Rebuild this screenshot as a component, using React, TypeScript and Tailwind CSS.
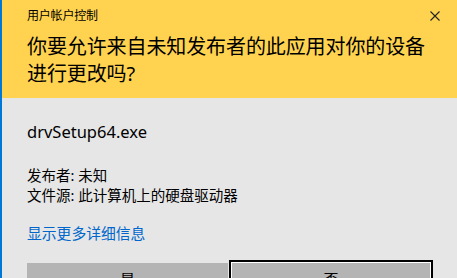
export default function App() {
  const font = { fontFamily: '"Noto Sans", "Noto Sans CJK SC", sans-serif' };
  return (
    <div
      className="w-[457px] h-[278px] overflow-hidden flex border-l-2 border-[#0078d7] bg-[#e6e6e6] text-black"
      style={font}
    >
      <div className="flex-1 flex flex-col">
        <div className="h-[98px] shrink-0 bg-[#ffd34f] pl-[25px] pr-[17px] pt-[8px] flex flex-col">
          <div className="flex items-start justify-between">
            <div className="text-[12px] leading-[16px] tracking-[-0.2px]">用户帐户控制</div>
            <svg width="10" height="10" viewBox="0 0 10 10" className="mt-[3px]">
              <path d="M0.5 0.5 L9.5 9.5 M9.5 0.5 L0.5 9.5" stroke="#222" strokeWidth="1.1" fill="none" />
            </svg>
          </div>
          <div className="mt-[9px] text-[20px] leading-[27px] tracking-[-0.1px] pr-[10px]">
            你要允许来自未知发布者的此应用对你的设备
            <br />
            进行更改吗?
          </div>
        </div>
        <div className="pl-[25px] pt-[24px] flex flex-col shrink-0">
          <div className="text-[16.5px] leading-[20px]">drvSetup64.exe</div>
          <div className="mt-[23px] text-[14.5px] leading-[20px]">发布者: 未知</div>
          <div className="text-[14.5px] leading-[20px]">文件源: 此计算机上的硬盘驱动器</div>
          <div className="mt-[18px] text-[14.8px] leading-[20px] text-[#0066cc]">显示更多详细信息</div>
          <div className="mt-[17px] flex items-start gap-[1px]">
            <div className="mt-[3px] w-[201px] h-[32px] bg-[#b4b4b4] flex items-center justify-center text-[15px] leading-[20px]">
              是
            </div>
            <div className="w-[204px] h-[38px] border-2 border-black">
              <div className="w-full h-full border border-white bg-[#b4b4b4] flex items-center justify-center text-[15px] leading-[20px]">
                否
              </div>
            </div>
          </div>
        </div>
      </div>
    </div>
  );
}
